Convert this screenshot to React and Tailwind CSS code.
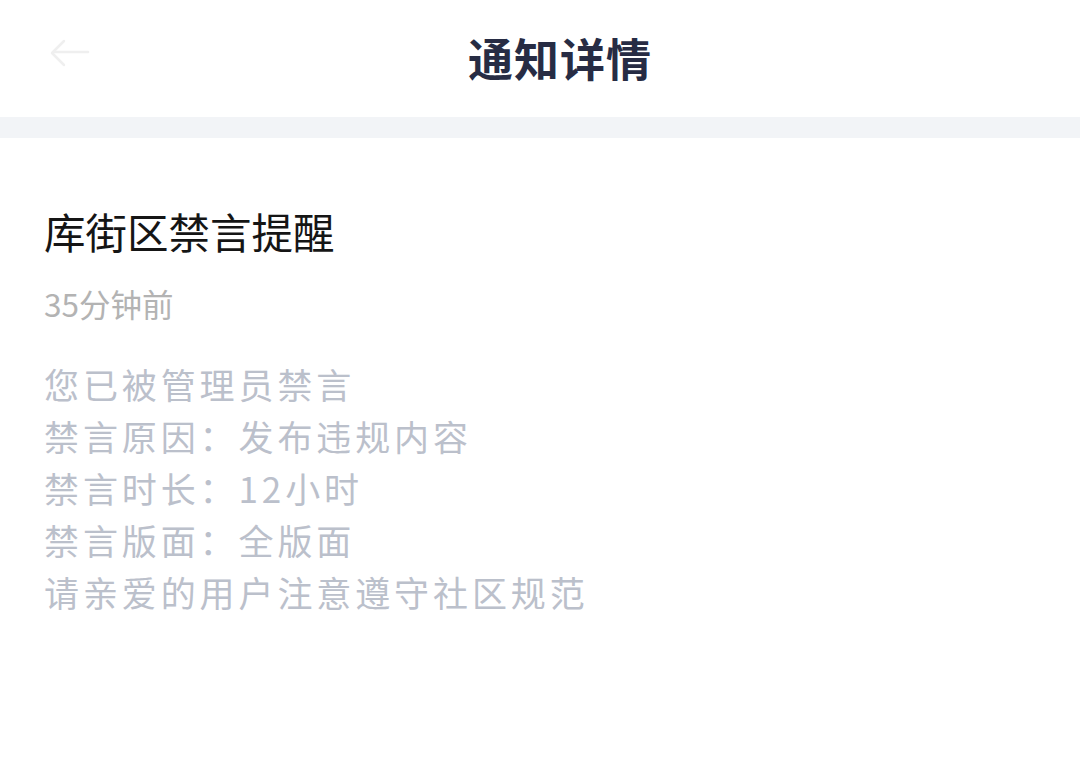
export default function App() {
  const lines = [
    '您已被管理员禁言',
    '禁言原因：发布违规内容',
    '禁言时长：12小时',
    '禁言版面：全版面',
    '请亲爱的用户注意遵守社区规范',
  ];

  return (
    <div className="w-[1080px] h-[757px] bg-white font-['Noto_Sans_CJK_SC','Noto_Sans',sans-serif] overflow-hidden">
      <header className="relative h-[117px] flex items-center justify-center">
        <button className="absolute left-[48px] top-[38px] w-[42px] h-[32px] flex items-center">
          <svg width="42" height="32" viewBox="0 0 42 32" fill="none" stroke="#efefef" strokeWidth="2.5" strokeLinecap="round" strokeLinejoin="round">
            <path d="M40 14H6" />
            <path d="M16 3L4 15L16 27" />
          </svg>
        </button>
        <h1 className="ml-[40px] text-[45px] font-bold text-[#272c44] tracking-[1px] leading-none -mt-[2px]">通知详情</h1>
      </header>
      <div className="h-[21px] bg-[#f2f4f7]" />
      <main className="px-[44px] pt-[69px]">
        <h2 className="text-[41.5px] text-[#151515] leading-[48px]">库街区禁言提醒</h2>
        <p className="mt-[28px] text-[31.5px] text-[#b3b3b3] leading-[40px]">35分钟前</p>
        <div className="mt-[35px] text-[35px] text-[#bbc0cb] leading-[52px] tracking-[3.9px]">
          {lines.map((l) => (
            <p key={l}>{l}</p>
          ))}
        </div>
      </main>
    </div>
  );
}
